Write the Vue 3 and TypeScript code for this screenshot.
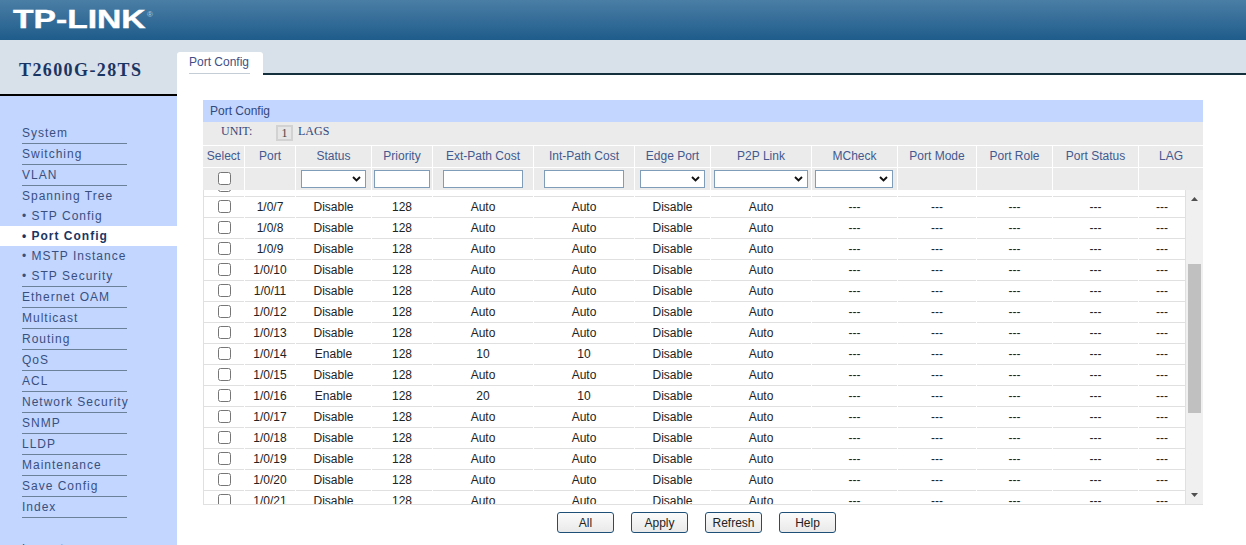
<script setup lang="ts">
import { onMounted, ref } from 'vue'

type NavItem = { label: string; sub?: boolean; active?: boolean; plain?: boolean }

const nav: NavItem[] = [
  { label: 'System' },
  { label: 'Switching' },
  { label: 'VLAN' },
  { label: 'Spanning Tree', plain: true },
  { label: '• STP Config', sub: true, plain: true },
  { label: '• Port Config', sub: true, plain: true, active: true },
  { label: '• MSTP Instance', sub: true, plain: true },
  { label: '• STP Security', sub: true },
  { label: 'Ethernet OAM' },
  { label: 'Multicast' },
  { label: 'Routing' },
  { label: 'QoS' },
  { label: 'ACL' },
  { label: 'Network Security' },
  { label: 'SNMP' },
  { label: 'LLDP' },
  { label: 'Maintenance' },
  { label: 'Save Config' },
  { label: 'Index' }
]

const headers = ['Select', 'Port', 'Status', 'Priority', 'Ext-Path Cost', 'Int-Path Cost', 'Edge Port', 'P2P Link', 'MCheck', 'Port Mode', 'Port Role', 'Port Status', 'LAG']

const rows = Array.from({ length: 28 }, (_, i) => {
  const n = i + 1
  const special: Record<number, [string, string]> = { 14: ['10', '10'], 16: ['20', '10'] }
  const s = special[n]
  return {
    port: `1/0/${n}`,
    status: s ? 'Enable' : 'Disable',
    ext: s ? s[0] : 'Auto',
    int: s ? s[1] : 'Auto'
  }
})

const buttons = ['All', 'Apply', 'Refresh', 'Help']

const scroller = ref<HTMLElement | null>(null)
onMounted(() => {
  if (scroller.value) scroller.value.scrollTop = 119
})
</script>

<template>
  <div class="page">
    <header class="topbar">
      <div class="logo"><span class="logo-text">TP-LINK</span><span class="logo-reg">®</span></div>
    </header>
    <div class="body">
      <aside class="side">
        <div class="brand">T2600G-28TS</div>
        <nav class="nav">
          <a
            v-for="item in nav"
            :key="item.label"
            class="nav-item"
            :class="{ sub: item.sub, active: item.active, plain: item.plain }"
          ><span class="nav-label">{{ item.label }}</span></a>
          <a class="nav-item logout plain"><span class="nav-label">Logout</span></a>
        </nav>
      </aside>
      <main class="main">
        <div class="tabbar">
          <div class="tab"><span class="tab-label">Port Config</span></div>
        </div>
        <section class="content">
          <div class="panel">
            <div class="panel-title">Port Config</div>
            <div class="unit-row">
              <span class="unit-label">UNIT:</span>
              <span class="unit-box">1</span>
              <span class="unit-lags">LAGS</span>
            </div>
            <div class="grid head-grid head-row">
              <div v-for="h in headers" :key="h" class="hcell">{{ h }}</div>
            </div>
            <div class="grid head-grid filter-row">
              <div class="fcell"><input type="checkbox" class="check check-head" /></div>
              <div class="fcell"></div>
              <div class="fcell">
                <span class="sel w65"><select class="ctl"></select><svg class="chev" viewBox="0 0 9 6"><path d="M1 1l3.5 3.5L8 1" /></svg></span>
              </div>
              <div class="fcell"><input type="text" class="ctl w56" /></div>
              <div class="fcell"><input type="text" class="ctl w80" /></div>
              <div class="fcell"><input type="text" class="ctl w80" /></div>
              <div class="fcell">
                <span class="sel w65"><select class="ctl"></select><svg class="chev" viewBox="0 0 9 6"><path d="M1 1l3.5 3.5L8 1" /></svg></span>
              </div>
              <div class="fcell">
                <span class="sel w94"><select class="ctl"></select><svg class="chev" viewBox="0 0 9 6"><path d="M1 1l3.5 3.5L8 1" /></svg></span>
              </div>
              <div class="fcell">
                <span class="sel w78 shift"><select class="ctl"></select><svg class="chev" viewBox="0 0 9 6"><path d="M1 1l3.5 3.5L8 1" /></svg></span>
              </div>
              <div class="fcell"></div>
              <div class="fcell"></div>
              <div class="fcell"></div>
              <div class="fcell"></div>
            </div>
            <div class="scroll-frame">
              <div ref="scroller" class="scroller">
                <div class="rows">
                  <div v-for="r in rows" :key="r.port" class="grid body-grid">
                    <div class="cell"><input type="checkbox" class="check" /></div>
                    <div class="cell">{{ r.port }}</div>
                    <div class="cell">{{ r.status }}</div>
                    <div class="cell">128</div>
                    <div class="cell">{{ r.ext }}</div>
                    <div class="cell">{{ r.int }}</div>
                    <div class="cell">Disable</div>
                    <div class="cell">Auto</div>
                    <div class="cell">---</div>
                    <div class="cell">---</div>
                    <div class="cell">---</div>
                    <div class="cell">---</div>
                    <div class="cell">---</div>
                  </div>
                </div>
              </div>
              <div class="sbar">
                <svg class="sbar-btn" viewBox="0 0 17 17"><path d="M5 11l3.5-4 3.5 4z" /></svg>
                <div class="sbar-track"><div class="sbar-thumb"></div></div>
                <svg class="sbar-btn" viewBox="0 0 17 17"><path d="M5 6h7l-3.5 4z" /></svg>
              </div>
            </div>
            <div class="actions">
              <button v-for="b in buttons" :key="b" type="button" class="btn">{{ b }}</button>
            </div>
          </div>
        </section>
      </main>
    </div>
  </div>
</template>

<style>
html, body { margin: 0; height: 100%; overflow: hidden; background: #fff; }
</style>

<style scoped>
.page {
  width: 1246px;
  height: 545px;
  overflow: hidden;
  display: flex;
  flex-direction: column;
  font-family: "Liberation Sans", Arial, sans-serif;
  font-size: 12px;
}

.topbar {
  height: 40px;
  flex: none;
  background: linear-gradient(#4a7ea5, #1f5c8b);
}
.logo { display: flex; align-items: flex-start; padding: 6px 0 0 13px; color: #fff; width: 145px; }
.logo-text {
  display: block;
  width: 134px;
  font-weight: 700;
  font-size: 25px;
  line-height: 26px;
  white-space: nowrap;
  transform: scaleX(1.345);
  transform-origin: left center;
  -webkit-text-stroke: 0.4px #fff;
}
.logo-reg {
  font-size: 8px;
  line-height: 10px;
  margin-top: 4px;
  color: #b9cddd;
}

.body { flex: 1; display: flex; min-height: 0; }

.side { width: 177px; flex: none; display: flex; flex-direction: column; }
.brand {
  flex: none;
  box-sizing: border-box;
  height: 56px;
  background: #d8e0ea;
  border-bottom: 2px solid #000;
  padding: 6px 0 0 19px;
  display: flex;
  align-items: center;
  font-family: "Liberation Serif", serif;
  font-weight: 700;
  font-size: 18px;
  letter-spacing: 1.4px;
  color: #1b3563;
}
.nav { flex: 1; background: #c2d6ff; padding-top: 27px; display: flex; flex-direction: column; }
.nav-item {
  display: block;
  height: 21px;
  flex: none;
  line-height: 20px;
  letter-spacing: 1px;
  color: #39507f;
  padding-left: 22px;
  box-sizing: border-box;
}
.nav-label { display: block; width: 105px; height: 21px; box-sizing: border-box; border-bottom: 1px solid #6a8199; white-space: nowrap; }
.nav-item.plain { height: 20px; }
.nav-item.plain .nav-label { border-bottom: 0; height: 20px; }
.nav-item.sub .nav-label { line-height: 20px; }
.nav-item.active { background: #fff; font-weight: 700; color: #1b3563; }
.nav-item.logout { margin-top: 21px; }

.main { flex: 1; min-width: 0; display: flex; flex-direction: column; }
.tabbar {
  height: 35px;
  flex: none;
  box-sizing: border-box;
  background: #d8e0ea;
  border-bottom: 2px solid #14303c;
  display: flex;
  align-items: flex-end;
}
.tab {
  width: 86px;
  height: 23px;
  margin-bottom: -2px;
  background: #fff;
  border-radius: 3px 3px 0 0;
  box-sizing: border-box;
  padding-left: 12px;
}
.tab-label {
  display: block;
  width: 61px;
  height: 22px;
  line-height: 20px;
  color: #3f4f86;
  border-bottom: 1px solid #c4ccd6;
  box-sizing: border-box;
}

.content { padding: 25px 0 0 26px; }
.panel { width: 1000px; }
.panel-title {
  height: 22px;
  line-height: 22px;
  background: #c2d6ff;
  padding-left: 7px;
  color: #33487c;
}
.unit-row {
  height: 23px;
  background: #ebebeb;
  display: flex;
  align-items: center;
  font-family: "Liberation Serif", serif;
  font-size: 12px;
  color: #35467a;
  padding: 0 0 4px 18px;
  box-sizing: border-box;
}
.unit-label { width: 55px; }
.unit-box {
  width: 17px;
  height: 16px;
  line-height: 12px;
  margin-top: 2px;
  text-align: center;
  background: #e6e6e6;
  border: 2px solid #d2d2d2;
  box-sizing: border-box;
  margin-right: 5px;
  color: #444;
}

.grid { display: grid; column-gap: 1px; }
.head-grid { grid-template-columns: 41px 50px 75px 60px 100px 100px 75px 100px 85px 78px 75px 85px 64px; background: #fff; }
.body-grid { grid-template-columns: 40px 50px 75px 60px 100px 100px 75px 100px 85px 78px 75px 85px 46px; }

.head-row { height: 23px; padding-top: 1px; box-sizing: border-box; border-bottom: 1px solid #fff; }
.hcell {
  background: #ebebeb;
  text-align: center;
  line-height: 21px;
  color: #43598f;
  white-space: nowrap;
}
.filter-row { height: 22px; }
.fcell {
  background: #ebebeb;
  display: flex;
  align-items: center;
  justify-content: center;
}
.check { width: 13px; height: 13px; margin: 0 0 1px; display: block; }
.check-head { margin: 0 0 1px 1px; }
.ctl {
  height: 18px;
  box-sizing: border-box;
  border: 1px solid #7f9db9;
  background: #fff;
  border-radius: 0;
  padding: 0;
  margin: 0 0 1px;
  display: block;
}
.sel { position: relative; display: block; height: 19px; }
.sel .ctl { width: 100%; appearance: none; -webkit-appearance: none; }
.shift { margin-right: 2px; }
.chev {
  position: absolute;
  right: 5px;
  top: 6px;
  width: 9px;
  height: 6px;
  pointer-events: none;
  fill: none;
  stroke: #111;
  stroke-width: 1.9;
}
.w56 { width: 56px; }
.w65 { width: 65px; }
.w78 { width: 78px; }
.w80 { width: 80px; }
.w94 { width: 94px; }

.scroll-frame {
  height: 315px;
  box-sizing: border-box;
  display: flex;
  border-left: 1px solid #e0e0e0;
  border-bottom: 1px solid #e0e0e0;
}
.scroller {
  flex: 1;
  min-width: 0;
  overflow: hidden;
}
.rows { border-right: 1px solid #e0e0e0; width: 981px; }
.sbar {
  width: 17px;
  flex: none;
  background: #f0f0f0;
  display: flex;
  flex-direction: column;
}
.sbar-btn { width: 17px; height: 17px; flex: none; display: block; fill: #505050; }
.sbar-track { flex: 1; min-height: 0; padding: 57px 2px 0; box-sizing: border-box; }
.sbar-thumb { height: 149px; background: #c0c0c0; }
.cell {
  height: 21px;
  box-sizing: border-box;
  border-bottom: 1px solid #e0e0e0;
  display: flex;
  align-items: center;
  justify-content: center;
  color: #222;
  white-space: nowrap;
}

.actions {
  display: flex;
  justify-content: center;
  gap: 17px;
  padding: 7px 13px 0 0;
}
.btn {
  width: 57px;
  height: 21px;
  box-sizing: border-box;
  padding: 0;
  font-family: "Liberation Sans", Arial, sans-serif;
  font-size: 12px;
  color: #222;
  border: 1px solid #1e5077;
  border-radius: 3px;
  background: linear-gradient(#fbfbfb, #e9e9e9);
}
</style>
